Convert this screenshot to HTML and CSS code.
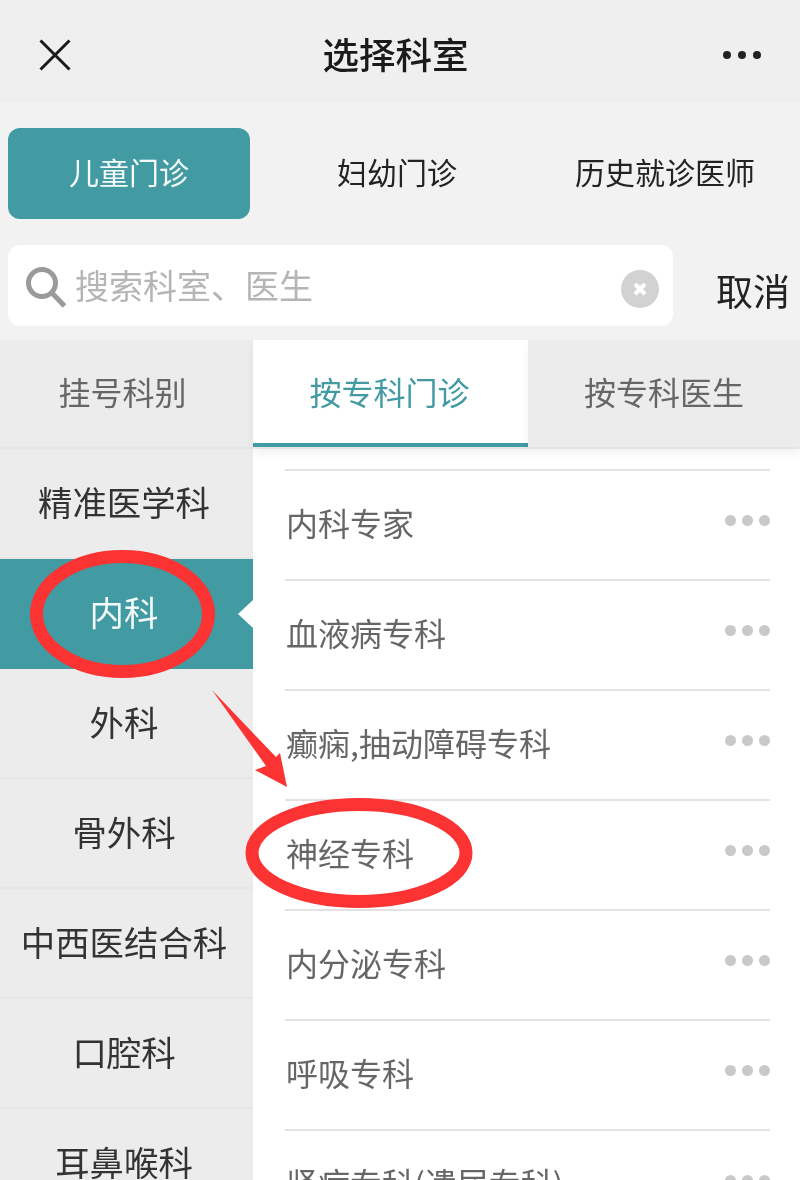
FILE: index.html
```html
<!DOCTYPE html>
<html lang="zh">
<head>
<meta charset="utf-8">
<title>选择科室</title>
<link rel="stylesheet" href="styles.css">
</head>
<body>
<div class="app">
  <header class="nav">
    <svg class="nav-close" viewBox="0 0 32 32"><path d="M1.5 1.5 30.5 30.5M30.5 1.5 1.5 30.5"/></svg>
    <h1 class="nav-title">选择科室</h1>
    <svg class="nav-more" viewBox="0 0 40 10"><circle cx="5" cy="5" r="4"/><circle cx="20" cy="5" r="4"/><circle cx="35" cy="5" r="4"/></svg>
  </header>
  <div class="clinic-tabs">
    <div class="clinic-tab clinic-tab-on">儿童门诊</div>
    <div class="clinic-tab">妇幼门诊</div>
    <div class="clinic-tab">历史就诊医师</div>
  </div>
  <div class="search-row">
    <div class="search-box">
      <svg class="search-icon" viewBox="0 0 42 42"><circle cx="17" cy="17" r="13.5"/><path d="M27 27 39.5 40"/></svg>
      <span class="search-text">搜索科室、医生</span>
      <svg class="search-clear" viewBox="0 0 38 38"><circle cx="19" cy="19" r="19"/><path d="M14 14 24 24M24 14 14 24"/></svg>
    </div>
    <span class="search-cancel">取消</span>
  </div>
  <div class="cat-tabs">
    <div class="cat-tab cat-first">挂号科别</div>
    <div class="cat-tab cat-on">按专科门诊</div>
    <div class="cat-tab cat-last">按专科医生</div>
  </div>
  <div class="main">
    <aside class="side">
      <div class="side-item">精准医学科</div>
      <div class="side-item side-on">内科</div>
      <div class="side-item">外科</div>
      <div class="side-item">骨外科</div>
      <div class="side-item">中西医结合科</div>
      <div class="side-item">口腔科</div>
      <div class="side-item">耳鼻喉科</div>
    </aside>
    <section class="list">
      <div class="row"><span>内科专家</span><i class="dots"><b></b><b></b><b></b></i></div>
      <div class="row"><span>血液病专科</span><i class="dots"><b></b><b></b><b></b></i></div>
      <div class="row"><span>癫痫,抽动障碍专科</span><i class="dots"><b></b><b></b><b></b></i></div>
      <div class="row"><span>神经专科</span><i class="dots"><b></b><b></b><b></b></i></div>
      <div class="row"><span>内分泌专科</span><i class="dots"><b></b><b></b><b></b></i></div>
      <div class="row"><span>呼吸专科</span><i class="dots"><b></b><b></b><b></b></i></div>
      <div class="row"><span>肾病专科(遗尿专科)</span><i class="dots"><b></b><b></b><b></b></i></div>
    </section>
  </div>
  <svg class="marks" viewBox="0 0 800 1180">
    <ellipse cx="122.500" cy="614" rx="86" ry="57.500"/>
    <ellipse cx="359" cy="853" rx="107" ry="48.500"/>
    <polygon points="212,690 276,757 280,753 287,787 255,770 266,766"/>
  </svg>
</div>
</body>
</html>
```
FILE: styles.css
```css
* { box-sizing: border-box; }
html, body { margin: 0; padding: 0; background: #f2f2f2; }
.app {
  position: relative;
  width: 800px;
  height: 1180px;
  overflow: hidden;
  background: #f2f2f2;
  font-family: "Noto Sans CJK SC", "Noto Sans", sans-serif;
  filter: blur(0.6px);
}
.nav {
  height: 102px;
  background: #efefef;
  display: flex;
  align-items: center;
  justify-content: space-between;
  padding: 6px 38px 0 39px;
}
.nav-close { width: 32px; height: 32px; fill: none; stroke: #1a1a1a; stroke-width: 3; margin-top: 2px; }
.nav-title { margin: 0 0 0 -2px; font-size: 36.500px; font-weight: 500; color: #1a1a1a; line-height: 1; }
.nav-more { width: 40px; height: 10px; fill: #222; margin-top: 2px; }
.clinic-tabs {
  display: grid;
  grid-template-columns: repeat(3, 242px);
  column-gap: 26px;
  padding: 26px 0 0 8px;
  height: 143px;
}
.clinic-tab {
  height: 91px;
  display: flex;
  align-items: center;
  justify-content: center;
  font-size: 30px;
  color: #222;
  border-radius: 12px;
  padding-bottom: 6px;
}
.clinic-tab-on { background: #429aa2; color: #f4fbfb; }
.search-row {
  display: flex;
  align-items: center;
  height: 81px;
  padding-left: 8px;
}
.search-box {
  width: 665px;
  height: 81px;
  background: #fff;
  border-radius: 12px;
  display: flex;
  align-items: center;
  padding: 0 14px 0 17px;
}
.search-icon { width: 42px; height: 42px; fill: none; stroke: #9a9a9a; stroke-width: 5; flex: none; margin-top: 3px; }
.search-text { flex: 1; margin-left: 8px; font-size: 34px; color: #b5b5b5; line-height: 1; margin-top: -2px; }
.search-clear { width: 38px; height: 38px; fill: #d2d2d2; stroke: #fff; stroke-width: 4; flex: none; margin-top: 7px; }
.search-clear circle { stroke: none; }
.search-cancel { margin-left: 43px; font-size: 37px; color: #222; line-height: 1; margin-top: 9px; white-space: nowrap; }
.cat-tabs {
  display: flex;
  height: 109px;
  margin-top: 14px;
  position: relative;
  z-index: 1;
}
.cat-tab {
  display: flex;
  align-items: center;
  justify-content: center;
  font-size: 32px;
  color: #666;
  padding-bottom: 6px;
  background: #ececec;
}
.cat-first { width: 253px; border-bottom: 2px solid #e6e6e6; padding-right: 8px; }
.cat-on { width: 275px; background: #fff; color: #429aa2; border-bottom: 4px solid #429aa2; height: 107px; box-shadow: 0 6px 8px rgba(0,0,0,.06); padding-bottom: 2px; padding-right: 2px; }
.cat-last { flex: 1; height: 107px; box-shadow: 0 6px 8px rgba(0,0,0,.06); }
.main { display: flex; height: 731px; }
.side { width: 253px; background: #ececec; flex: none; }
.side-item {
  height: 110px;
  display: flex;
  align-items: center;
  justify-content: center;
  font-size: 34.400px;
  color: #333;
  border-bottom: 2px solid #e6e6e6;
  position: relative;
  padding: 0 5px 5px 0;
}
.side-on { background: #429aa2; color: #f4fbfb; border-bottom-color: #429aa2; }
.side-on::after {
  content: "";
  position: absolute;
  right: 0;
  top: 41px;
  border: 14px solid transparent;
  border-left-width: 0;
  border-right: 15px solid #fff;
}
.list { flex: 1; background: #fff; padding: 20px 30px 0 32px; }
.row {
  height: 110px;
  border-top: 2px solid #e2e2e2;
  display: flex;
  align-items: center;
  justify-content: space-between;
  font-size: 32px;
  color: #666;
}
.row span { margin: -6px 0 0 1px; }
.dots { display: flex; gap: 6px; margin-top: -10px; }
.dots b { width: 11px; height: 11px; border-radius: 50%; background: #c9c9c9; }
.marks { position: absolute; inset: 0; width: 800px; height: 1180px; z-index: 2; }
.marks ellipse { fill: none; stroke: #fb3333; stroke-width: 13; }
.marks polygon { fill: #fb3333; }
```
